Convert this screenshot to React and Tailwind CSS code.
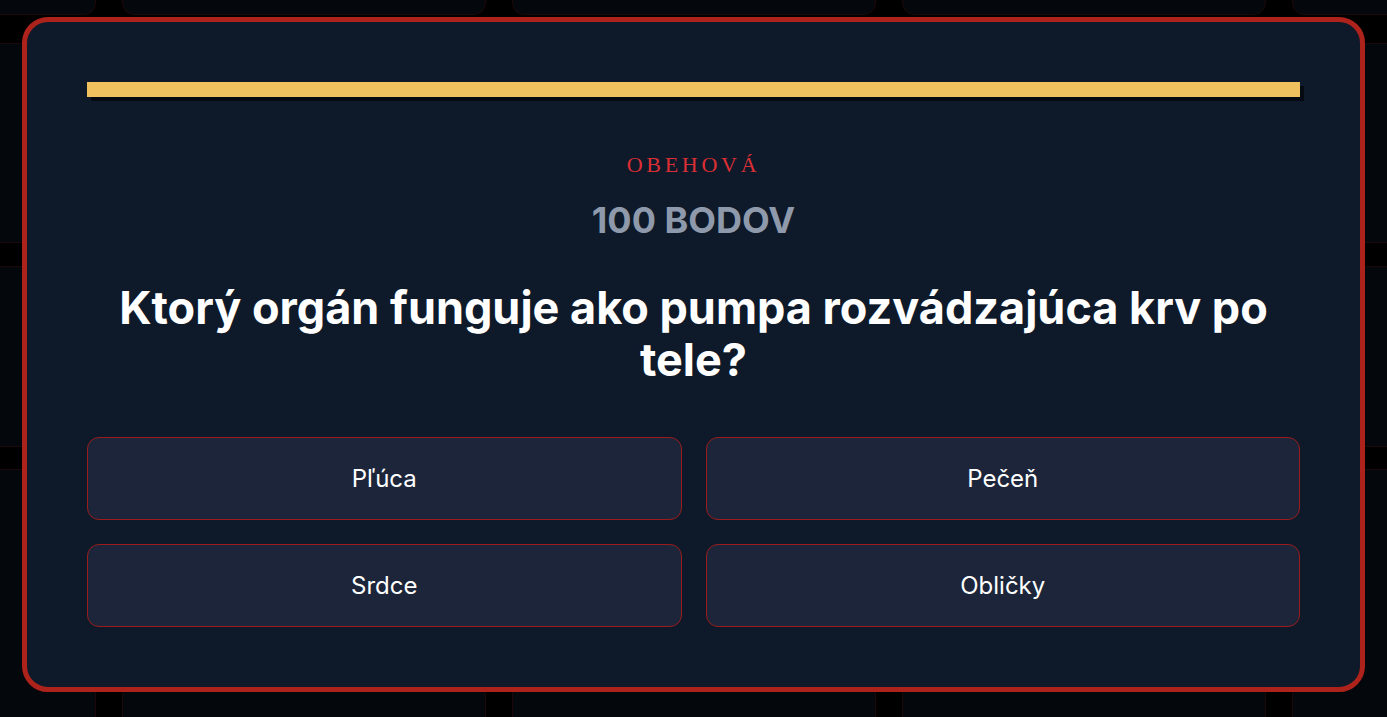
const columns = [0, 1, 2, 3, 4]
const rows = ['h-[165px]', 'h-[200px]', 'h-[181px]', 'h-[260px]']
const rowGaps = ['mt-[28px]', 'mt-[23px]', 'mt-[22px]']

const answers = ['Pľúca', 'Pečeň', 'Srdce', 'Obličky']

function Board() {
  // faded game board behind the question dialog
  return (
    <div className="flex flex-col -mt-[150px] -ml-[268px]">
      {rows.map((h, r) => (
        <div key={r} className={`flex gap-[26px] ${r > 0 ? rowGaps[r - 1] : ''}`}>
          {columns.map((c) => (
            <div
              key={c}
              className={`${h} w-[364px] shrink-0 rounded-[12px] bg-[#04070c] border border-[#1c0808]`}
            ></div>
          ))}
        </div>
      ))}
    </div>
  )
}

export default function App() {
  return (
    <div className="relative w-[1387px] h-[717px] overflow-hidden bg-black font-['Inter','Noto_Sans',sans-serif]">
      <Board />

      <div className="absolute inset-0 flex items-start justify-center pt-[17px] px-[22px]">
        <div className="w-full rounded-[26px] border-[5px] border-[#ad231c] bg-[#0e1a2a] px-[60px] pt-[60px] pb-[60px]">
          <div className="h-[15px] bg-[#efc15f] shadow-[4px_4px_0_#050a12]"></div>

          <div className="mt-[53px] text-center font-['Liberation_Serif',serif] text-[22px] leading-[30px] tracking-[0.17em] text-[#dc2f35]">
            OBEHOVÁ
          </div>

          <div className="mt-[18px] text-center text-[36px] leading-[44px] font-bold text-[#8e9aab]">
            100 BODOV
          </div>

          <h2 className="mt-[40px] px-[10px] text-center text-[45px] leading-[52px] font-bold text-white">
            Ktorý orgán funguje ako pumpa rozvádzajúca krv po tele?
          </h2>

          <div className="mt-[51px] grid grid-cols-2 gap-[24px]">
            {answers.map((a) => (
              <button
                key={a}
                className="h-[83px] rounded-[12px] border border-[#9b1c1c] bg-[#1c2539] text-[24px] text-white"
              >
                {a}
              </button>
            ))}
          </div>
        </div>
      </div>
    </div>
  )
}
